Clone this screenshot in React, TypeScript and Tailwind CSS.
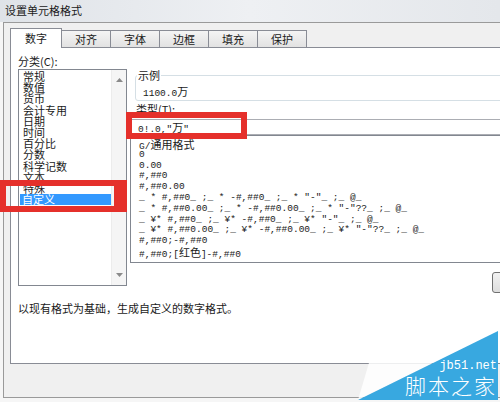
import React from 'react';

const categories = ['常规', '数值', '货币', '会计专用', '日期', '时间', '百分比', '分数', '科学记数', '文本', '特殊', '自定义'];

const formats = [
  'G/通用格式',
  '0',
  '0.00',
  '#,##0',
  '#,##0.00',
  '_ * #,##0_ ;_ * -#,##0_ ;_ * "-"_ ;_ @_ ',
  '_ * #,##0.00_ ;_ * -#,##0.00_ ;_ * "-"??_ ;_ @_ ',
  '_ ¥* #,##0_ ;_ ¥* -#,##0_ ;_ ¥* "-"_ ;_ @_ ',
  '_ ¥* #,##0.00_ ;_ ¥* -#,##0.00_ ;_ ¥* "-"??_ ;_ @_ ',
  '#,##0;-#,##0',
  '#,##0;[红色]-#,##0',
];

const tabs = ['对齐', '字体', '边框', '填充', '保护'];

// ascii in mono, chinese a bit larger like SimSun
function Mixed({ text }: { text: string }) {
  const parts = text.split(/([\u4e00-\u9fff]+)/);
  return (
    <>
      {parts.map((p, i) =>
        /[\u4e00-\u9fff]/.test(p) ? (
          <span key={i} className="font-['Noto_Sans_CJK_SC',sans-serif] text-[11px]">
            {p}
          </span>
        ) : (
          <span key={i}>{p}</span>
        )
      )}
    </>
  );
}

function Arrow({ up }: { up?: boolean }) {
  return (
    <svg width="7" height="4" viewBox="0 0 7 4">
      <polygon points={up ? '3.5,0 7,4 0,4' : '0,0 7,0 3.5,4'} fill="#8a8a8a" />
    </svg>
  );
}

export default function App() {
  return (
    <div className="relative w-[500px] h-[402px] overflow-hidden bg-[#f6f6f6] font-['Noto_Sans_CJK_SC',sans-serif] text-[#1a1a1a]">
      {/* title bar */}
      <div className="h-[22px] bg-gradient-to-r from-[#dfe3e8] via-[#eef0f3] to-[#e4e7eb] pl-[5px] pt-[4px] text-[11px] leading-[12px]">
        设置单元格格式
      </div>

      {/* window body */}
      <div className="ml-[3px] h-[376px] border-l border-t border-b border-[#9a9a9a] bg-[#f0f0f0] pl-[6px] pt-[5px]">
        {/* tabs */}
        <div className="flex h-[19px] items-end">
          <div className="relative z-10 -mb-px flex h-[20px] w-[52px] items-center justify-center border-x border-t border-[#898c95] bg-white pb-[1px] text-[11px] leading-[12px]">
            数字
          </div>
          {tabs.map((t) => (
            <div
              key={t}
              className="-ml-px flex h-[17px] w-[50px] items-center justify-center border-x border-t border-[#898c95] bg-gradient-to-b from-[#f4f4f4] to-[#e2e2e2] text-[11px] leading-[12px]"
            >
              {t}
            </div>
          ))}
        </div>

        {/* panel */}
        <div className="h-[317px] w-[520px] border border-r-0 border-[#898c95] bg-white pl-[7px]">
          <div className="flex">
            {/* left column */}
            <div className="flex w-[114px] flex-col">
              <div className="h-[21px] pt-[7px] text-[11px] leading-[12px]">分类(C):</div>
              <div className="flex h-[217px] border border-[#828790]">
                <div className="flex-1 pl-[1px] pt-[1px] text-[11px] leading-[11.2px]">
                  {categories.map((c) => (
                    <div
                      key={c}
                      className={c === '自定义' ? 'bg-[#3399ff] pl-[2px] text-white' : 'pl-[3px]'}
                    >
                      {c}
                    </div>
                  ))}
                </div>
                <div className="flex w-[15px] flex-col items-center justify-between border-l border-[#ececec] bg-[#f5f5f5] py-[8px]">
                  <Arrow up />
                  <Arrow />
                </div>
              </div>
            </div>

            {/* right column */}
            <div className="ml-[3px] flex w-[400px] flex-col pt-[21px]">
              <fieldset className="ml-[5px] h-[32px] rounded-[3px] border border-[#d5dfe5] p-0">
                <legend className="ml-[1px] px-[1px] text-[11px] leading-[12px]">示例</legend>
                <div className="pl-[7px] pt-[4px] font-['Liberation_Mono','Noto_Sans_CJK_SC',monospace] text-[9.5px] leading-[12px]">
                  <Mixed text="1100.0万" />
                </div>
              </fieldset>
              <div className="h-[18px] pl-[6px] pt-[2px] text-[11px] leading-[12px]">类型(T):</div>
              <div className="h-[16px] border border-[#abadb3] pl-[7px] pt-[1px] font-['Liberation_Mono','Noto_Sans_CJK_SC',monospace] text-[9.5px] leading-[12px] whitespace-pre">
                <Mixed text={'0!.0,"万"'} />
              </div>
              <div className="h-[128px] border border-[#828790] pl-[8px] pt-[3px] font-['Liberation_Mono','Noto_Sans_CJK_SC',monospace] text-[9.5px]">
                {formats.map((f) => (
                  <div key={f} className="h-[10.8px] leading-[10.8px] whitespace-pre">
                    <Mixed text={f} />
                  </div>
                ))}
              </div>
              <div className="mt-[9px] pl-[362px]">
                <div className="h-[21px] w-[75px] rounded-[3px] border border-[#707070] bg-gradient-to-b from-[#f2f2f2] to-[#dddddd]" />
              </div>
            </div>
          </div>

          <div className="mt-[9px] text-[11px] leading-[12px]">以现有格式为基础，生成自定义的数字格式。</div>
        </div>
      </div>

      {/* red annotation boxes */}
      <div className="absolute left-[126px] top-[112px] h-[27px] w-[121px] border-[6px] border-[#e5302b]" />
      <div className="absolute left-0 top-[180px] h-[32px] w-[127px] border-[6px] border-r-[13px] border-[#e5302b]" />

      {/* watermark */}
      <svg className="absolute right-0 bottom-0" width="142" height="72" viewBox="0 0 142 72">
        <polygon points="0,70 13,26 140,1" fill="#ffffff" fillOpacity="0.85" />
        <polygon points="0,70 140,1 140,70" fill="#38a8e0" />
      </svg>
      <div className="absolute right-[3px] top-[360px] flex flex-col items-end text-white">
        <div className="font-['Liberation_Mono',monospace] text-[12px] leading-[13px]">jb51.net</div>
        <div className="font-light text-[21px] leading-[24px] tracking-[2px]">脚本之家</div>
      </div>
    </div>
  );
}
